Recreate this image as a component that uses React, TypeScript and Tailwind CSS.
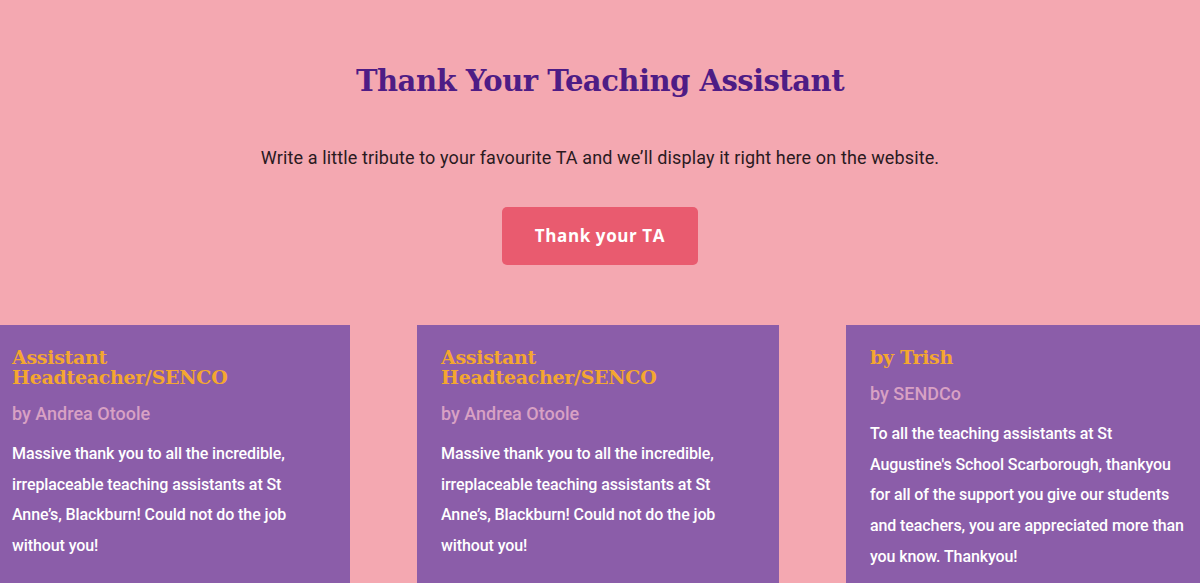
import React from 'react';

interface Tribute {
  title: string;
  by: string;
  text: string;
}

const tributes: Tribute[] = [
  {
    title: 'Assistant Headteacher/SENCO',
    by: 'by Andrea Otoole',
    text: 'Massive thank you to all the incredible, irreplaceable teaching assistants at St Anne’s, Blackburn! Could not do the job without you!',
  },
  {
    title: 'Assistant Headteacher/SENCO',
    by: 'by Andrea Otoole',
    text: 'Massive thank you to all the incredible, irreplaceable teaching assistants at St Anne’s, Blackburn! Could not do the job without you!',
  },
  {
    title: 'by Trish',
    by: 'by SENDCo',
    text: "To all the teaching assistants at St Augustine's School Scarborough, thankyou for all of the support you give our students and teachers, you are appreciated more than you know. Thankyou!",
  },
];

const slab = "font-['DejaVu_Serif',serif]";

export default function App() {
  return (
    <div className="h-[583px] w-[1200px] overflow-hidden bg-[#f4a8b1] font-['Roboto',sans-serif]">
      {/* Intro */}
      <section className="flex flex-col items-center pt-[60px]">
        <h1 className={`${slab} text-[29px] leading-[42px] font-bold tracking-[-0.5px] text-[#4e1c85]`}>
          Thank Your Teaching Assistant
        </h1>
        <p className="mt-[44px] text-[18px] leading-[24px] tracking-[0.12px] text-[#2a1a1f]">
          Write a little tribute to your favourite TA and we’ll display it right here on the website.
        </p>
        <button className="mt-[37px] h-[58px] w-[196px] rounded-[5px] bg-[#e95b6f] text-[17px] font-bold tracking-[0.6px] text-white font-['Open_Sans',sans-serif]">
          Thank your TA
        </button>
      </section>

      {/* Tributes */}
      <div className="mt-[60px] -ml-[12px] flex gap-[67px]">
        {tributes.map((t, i) => (
          <article key={i} className="h-[270px] w-[362px] shrink-0 bg-[#8b5da9] pl-[24px] pr-[18px] pt-[22px]">
            <h3 className={`${slab} pr-[12px] text-[19px] leading-[20px] font-bold tracking-[-0.3px] text-[#f4a72f]`}>
              {t.title}
            </h3>
            <p className="mt-[15px] text-[18px] leading-[24px] font-medium text-[#d8a1c4]">{t.by}</p>
            <p className="mt-[13px] text-[16px] leading-[30.7px] font-medium tracking-[-0.1px] text-white">{t.text}</p>
          </article>
        ))}
      </div>
    </div>
  );
}
